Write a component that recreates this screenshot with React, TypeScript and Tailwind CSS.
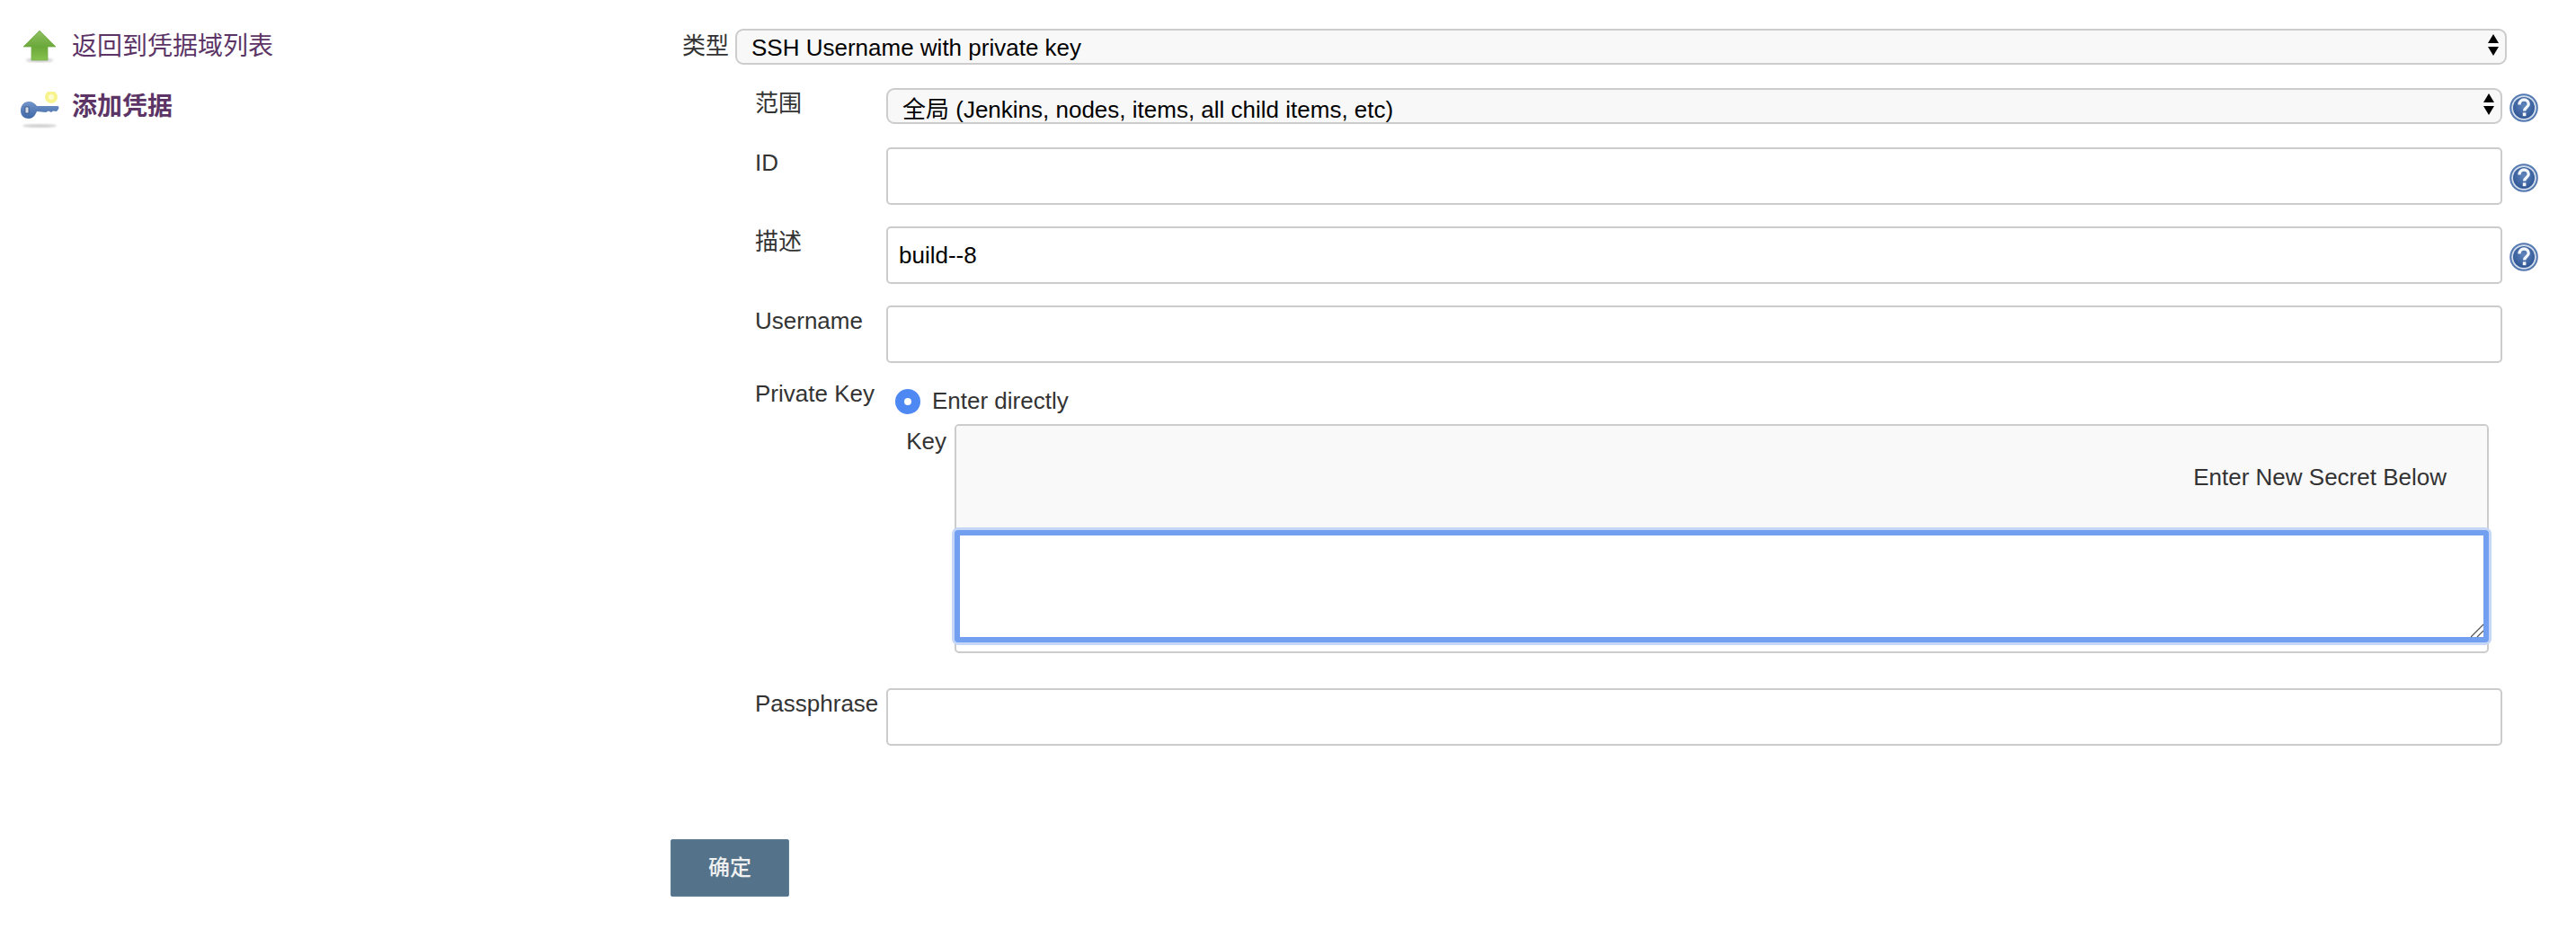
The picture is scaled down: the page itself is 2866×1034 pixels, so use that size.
const font = "font-['Liberation_Sans','Noto_Sans_CJK_SC',sans-serif]";

function UpArrowIcon() {
  return (
    <svg width="44" height="44" viewBox="0 0 44 44" className="shrink-0">
      <defs>
        <linearGradient id="arrowFill" x1="0" y1="0" x2="0" y2="1">
          <stop offset="0" stopColor="#8fc060" />
          <stop offset="0.55" stopColor="#6aa83a" />
          <stop offset="1" stopColor="#86c24e" />
        </linearGradient>
        <filter id="soft">
          <feGaussianBlur stdDeviation="1.6" />
        </filter>
      </defs>
      <ellipse cx="22" cy="37" rx="15" ry="2.5" fill="#999" opacity="0.5" filter="url(#soft)" />
      <path d="M22 4 L40 22 L31 22 L31 37 L13 37 L13 22 L4 22 Z" fill="url(#arrowFill)" stroke="#7cae52" strokeWidth="0.8" strokeLinejoin="round" />
    </svg>
  );
}

function KeyIcon() {
  return (
    <svg width="44" height="44" viewBox="0 0 44 44" className="shrink-0">
      <defs>
        <linearGradient id="keyFill" x1="0" y1="0" x2="0" y2="1">
          <stop offset="0" stopColor="#7395c9" />
          <stop offset="1" stopColor="#3f68a8" />
        </linearGradient>
        <filter id="softKey">
          <feGaussianBlur stdDeviation="1.3" />
        </filter>
      </defs>
      <circle cx="35" cy="6" r="7" fill="#f6f27a" opacity="0.85" />
      <circle cx="35" cy="6" r="3" fill="#fdfbd0" />
      <ellipse cx="22" cy="38" rx="19" ry="1.8" fill="#aaa" opacity="0.6" filter="url(#softKey)" />
      <path d="M1 21 C1 15 5 11 10 11 C14 11 17 13 19 16 L42 16 C43.5 16 44 18 43 19.5 L41 22 L37 21.5 L35 23 L32 21.5 L29 23 L19 22 C17 27 14 30 10 30 C5 30 1 27 1 21 Z" fill="url(#keyFill)" />
      <rect x="6" y="17" width="4" height="7" fill="#d7dde8" stroke="#2f4f80" strokeWidth="0.8" />
    </svg>
  );
}

function HelpIcon() {
  return (
    <svg width="32" height="32" viewBox="0 0 32 32" className="shrink-0">
      <defs>
        <radialGradient id="helpFill" cx="0.5" cy="0.4" r="0.6">
          <stop offset="0" stopColor="#5f86bd" />
          <stop offset="1" stopColor="#2f5494" />
        </radialGradient>
      </defs>
      <circle cx="16" cy="16" r="15.8" fill="#5479b2" />
      <circle cx="16" cy="16" r="13.8" fill="#d3deec" />
      <circle cx="16" cy="16" r="12" fill="url(#helpFill)" />
      <path d="M11 12.5 C11 9 13.5 7 16 7 C19.2 7 21.2 9.2 21.2 12 C21.2 15.4 16.6 15.6 16.6 19.4" fill="none" stroke="#f2f5fa" strokeWidth="3.4" />
      <rect x="14.8" y="21.4" width="3.6" height="3.8" fill="#f2f5fa" />
    </svg>
  );
}

function SelectArrows() {
  return (
    <svg width="12" height="24" viewBox="0 0 12 24" className="absolute right-[9px] top-[6px] pointer-events-none">
      <path d="M6 0 L12 10 L0 10 Z M0 14 L12 14 L6 24 Z" fill="#000" />
    </svg>
  );
}

function Select({ value, className, textClass }: { value: string; className: string; textClass: string }) {
  return (
    <div className={`relative h-[40px] ${className}`}>
      <select
        defaultValue={value}
        className={`${font} ${textClass} appearance-none w-full h-full pl-[16px] border-2 border-[#ccc] rounded-[9px] bg-[#f8f8f8] text-[26px] text-black outline-none`}
      >
        <option>{value}</option>
      </select>
      <SelectArrows />
    </div>
  );
}

function Field({ label, value, help }: { label: string; value?: string; help?: boolean }) {
  return (
    <div className="flex items-start">
      <label className="w-[146px] shrink-0 text-[26px] leading-[34px] text-[#333]">{label}</label>
      <input
        defaultValue={value}
        className={`${font} w-[1798px] h-[64px] px-[12px] border-2 border-[#ccc] rounded-[5px] bg-white text-[26px] text-black outline-none`}
      />
      {help && (
        <div className="ml-[8px] mt-[18px]">
          <HelpIcon />
        </div>
      )}
    </div>
  );
}

export default function App() {
  return (
    <div className={`${font} w-[2866px] h-[1034px] bg-white flex overflow-hidden`}>
      {/* Sidebar */}
      <div className="w-[746px] shrink-0 pl-[22px] pt-[30px] flex flex-col gap-[24px] text-[28px] text-[#5c3566]">
        <div className="flex items-center gap-[14px]">
          <UpArrowIcon />
          <span>返回到凭据域列表</span>
        </div>
        <div className="flex items-center gap-[14px]">
          <KeyIcon />
          <span className="font-bold mb-[9px]">添加凭据</span>
        </div>
      </div>

      {/* Form */}
      <div className="flex-1 pt-[32px]">
        <div className="flex items-center pl-[13px]">
          <label className="w-[59px] shrink-0 text-[26px] leading-[34px] text-[#333] -mt-[2px]">类型</label>
          <Select value="SSH Username with private key" className="w-[1971px]" textClass="pb-[1px]" />
        </div>

        <div className="pl-[94px] pt-[26px] flex flex-col">
          <div className="flex items-start">
            <label className="w-[146px] shrink-0 text-[26px] leading-[34px] text-[#333]">范围</label>
            <Select value="全局 (Jenkins, nodes, items, all child items, etc)" className="w-[1798px]" textClass="pt-[3px]" />
            <div className="ml-[8px] mt-[6px]">
              <HelpIcon />
            </div>
          </div>

          <div className="mt-[26px] flex flex-col gap-[24px]">
            <Field label="ID" help />
            <Field label="描述" value="build--8" help />
            <Field label="Username" />
          </div>

          {/* Private key */}
          <div className="mt-[17px] flex items-start">
            <label className="w-[146px] shrink-0 text-[26px] leading-[34px] text-[#333]">Private Key</label>
            <div className="w-[1798px]">
              <div className="flex items-center h-[51px] pl-[10px] gap-[13px] text-[26px] text-[#333]">
                <input
                  type="radio"
                  defaultChecked
                  className="appearance-none w-[28px] h-[28px] rounded-full border-[10px] border-[#4d88f3] bg-white"
                />
                <span>Enter directly</span>
              </div>
              <div className="flex items-start">
                <label className="w-[76px] shrink-0 pr-[9px] text-right text-[26px] leading-[34px] text-[#333] pt-[2px]">Key</label>
                <div className="w-[1707px] h-[255px] border-2 border-[#ccc] rounded-[5px] bg-white">
                  <div className="h-[116px] rounded-t-[3px] bg-[#f9f9f9] flex items-center justify-end pr-[45px] text-[26px] text-[#333] pb-[1px]">
                    Enter New Secret Below
                  </div>
                  <div className="relative -mx-[2px]">
                    <textarea className="block w-[1707px] h-[125px] border-[6px] border-[#739ff0] rounded-[4px] bg-white shadow-[0_0_0_3px_#c6d6f6] outline-none resize-none" />
                    {/* resize grip */}
                    <svg width="16" height="16" viewBox="0 0 16 16" className="absolute right-[5px] bottom-[5px] pointer-events-none">
                      <path d="M1 15 L15 1 M8 15 L15 8" stroke="#555" strokeWidth="1.2" fill="none" />
                    </svg>
                  </div>
                </div>
              </div>
            </div>
          </div>

          <div className="mt-[39px]">
            <Field label="Passphrase" />
          </div>
        </div>

        <button className="mt-[104px] w-[132px] h-[64px] rounded-[2px] border border-[#5f8299] bg-[#54738a] text-[24px] font-medium text-[#f0f0f0]">
          确定
        </button>
      </div>
    </div>
  );
}
